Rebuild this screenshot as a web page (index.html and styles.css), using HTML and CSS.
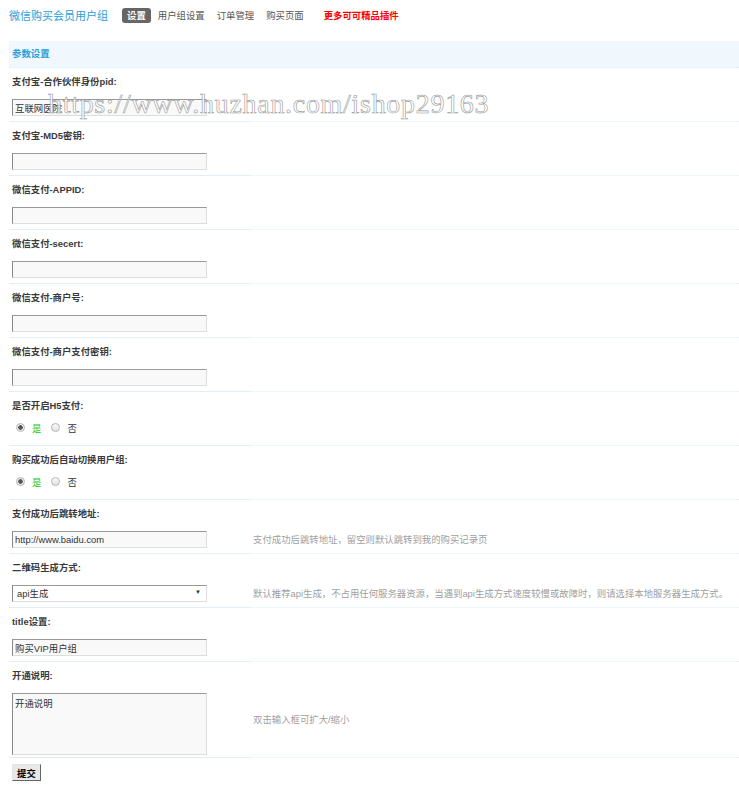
FILE: index.html
```html
<!DOCTYPE html>
<html lang="zh-CN">
<head>
    <meta charset="UTF-8">
    <meta name="viewport" content="width=device-width, initial-scale=1.0">
    <title>微信购买会员用户组</title>
    <link rel="stylesheet" href="styles.css">
</head>
<body>
<div class="page">
    <div class="topbar">
        <h3>微信购买会员用户组</h3>
        <ul class="tabs">
            <li><a href="#" class="current">设置</a></li>
            <li><a href="#">用户组设置</a></li>
            <li><a href="#">订单管理</a></li>
            <li><a href="#">购买页面</a></li>
            <li><a href="#" class="more">更多可可精品插件</a></li>
        </ul>
    </div>

    <form class="settings">
        <div class="partition">参数设置</div>

        <div class="row">
            <div class="label">支付宝-合作伙伴身份pid:</div>
            <div class="field"><input type="text" class="txt" value="互联网医院"></div>
            <div class="tip"></div>
        </div>
        <div class="row">
            <div class="label">支付宝-MD5密钥:</div>
            <div class="field"><input type="text" class="txt"></div>
            <div class="tip"></div>
        </div>
        <div class="row">
            <div class="label">微信支付-APPID:</div>
            <div class="field"><input type="text" class="txt"></div>
            <div class="tip"></div>
        </div>
        <div class="row">
            <div class="label">微信支付-secert:</div>
            <div class="field"><input type="text" class="txt"></div>
            <div class="tip"></div>
        </div>
        <div class="row">
            <div class="label">微信支付-商户号:</div>
            <div class="field"><input type="text" class="txt"></div>
            <div class="tip"></div>
        </div>
        <div class="row">
            <div class="label">微信支付-商户支付密钥:</div>
            <div class="field"><input type="text" class="txt"></div>
            <div class="tip"></div>
        </div>
        <div class="row">
            <div class="label">是否开启H5支付:</div>
            <div class="field">
                <div class="radios">
                    <label class="on"><input type="radio" name="h5" checked>是</label>
                    <label><input type="radio" name="h5">否</label>
                </div>
            </div>
            <div class="tip"></div>
        </div>
        <div class="row">
            <div class="label">购买成功后自动切换用户组:</div>
            <div class="field">
                <div class="radios">
                    <label class="on"><input type="radio" name="switch" checked>是</label>
                    <label><input type="radio" name="switch">否</label>
                </div>
            </div>
            <div class="tip"></div>
        </div>
        <div class="row">
            <div class="label">支付成功后跳转地址:</div>
            <div class="field"><input type="text" class="txt" value="http://www.baidu.com"></div>
            <div class="tip">支付成功后跳转地址，留空则默认跳转到我的购买记录页</div>
        </div>
        <div class="row">
            <div class="label">二维码生成方式:</div>
            <div class="field">
                <div class="select">
                    <select>
                        <option>api生成</option>
                        <option>本地服务器生成</option>
                    </select>
                </div>
            </div>
            <div class="tip">默认推荐api生成，不占用任何服务器资源，当遇到api生成方式速度较慢或故障时，则请选择本地服务器生成方式。</div>
        </div>
        <div class="row">
            <div class="label">title设置:</div>
            <div class="field"><input type="text" class="txt" value="购买VIP用户组"></div>
            <div class="tip"></div>
        </div>
        <div class="row">
            <div class="label">开通说明:</div>
            <div class="field area"><textarea class="txtarea">开通说明</textarea></div>
            <div class="tip tall">双击输入框可扩大/缩小</div>
        </div>

        <div class="submit"><button type="button">提交</button></div>
    </form>

    <div class="mark">https://www.huzhan.com/ishop29163</div>
</div>
</body>
</html>
```
FILE: styles.css
```css
body {
    margin: 0;
    font: 9.4px "Liberation Sans", "Noto Sans CJK SC", sans-serif;
    color: #333;
    background: #fff;
}
.page {
    position: relative;
    padding: 0 0 14px 9px;
}

/* title + tabs */
.topbar {
    display: flex;
    align-items: center;
    height: 30px;
}
.topbar h3 {
    margin: 0 14px 0 0;
    font-size: 11px;
    font-weight: normal;
    color: #2b9ed9;
}
.tabs {
    display: flex;
    list-style: none;
    margin: 0;
    padding: 0;
}
.tabs a {
    display: block;
    padding: 0 5px;
    margin-right: 2px;
    line-height: 15px;
    color: #555;
    text-decoration: none;
    border-radius: 3px;
}
.tabs .current {
    background: #666;
    color: #fff;
    font-weight: bold;
}
.tabs .more {
    margin-left: 8px;
    color: #f00;
    font-weight: bold;
}

/* settings table */
.partition {
    margin-top: 11px;
    height: 26px;
    line-height: 26px;
    padding-left: 3px;
    background: #f0f7fd;
    border-bottom: 1px dotted #deeffb;
    color: #2b9ed9;
    font-weight: bold;
}
.row {
    display: grid;
    grid-template-columns: 241px 1fr;
}
.row .label {
    grid-column: 1 / 3;
    height: 28px;
    line-height: 28px;
    padding-left: 3px;
    font-weight: bold;
    color: #3a3a3a;
}
.row .field {
    padding: 3px 3px 5px;
    border-bottom: 1px solid #deeffb;
}
.row .field.area {
    padding-bottom: 2px;
}
.row .tip {
    display: flex;
    align-items: center;
    padding: 0 0 4px 3px;
    white-space: nowrap;
    color: #a0a0a0;
    border-bottom: 1px dotted #deeffb;
}
.row .tip.tall {
    padding-bottom: 10px;
}

.txt,
.txtarea,
.select {
    box-sizing: border-box;
    width: 195px;
    border: 1px solid;
    border-color: #999 #ddd #ddd #888;
    background: #f9f9f9;
    color: #333;
    font: inherit;
}
.txt {
    display: block;
    height: 17px;
    padding: 0 2px;
}
.txtarea {
    display: block;
    height: 62px;
    padding: 2px;
    resize: none;
}
.select {
    position: relative;
    height: 17px;
    background: #fff;
}
.select select {
    appearance: none;
    width: 100%;
    height: 15px;
    border: 0;
    padding: 0 4px;
    background: transparent;
    font: inherit;
    color: #333;
}
.select::after {
    content: "▼";
    position: absolute;
    right: 5px;
    top: 3px;
    font-size: 6px;
    color: #333;
}

.radios {
    display: flex;
    align-items: center;
    height: 9px;
    margin-bottom: 8px;
}
.radios label {
    display: flex;
    align-items: center;
    margin-left: 4px;
    margin-right: 6px;
}
.radios label.on {
    color: #2c2;
}
.radios input {
    appearance: none;
    width: 9px;
    height: 9px;
    margin: 0 7px 0 0;
    border: 1px solid #b5b5b5;
    border-radius: 50%;
    background: linear-gradient(#fafafa, #e2e2e2);
}
.radios input:checked {
    background: radial-gradient(circle, #555 0 2px, #eee 2.5px);
}

.submit {
    padding: 6px 3px 0;
}
.submit button {
    height: 17px;
    padding: 0 4px;
    border: 1px solid;
    border-color: #e4e4e4 #666 #666 #e4e4e4;
    background: #e8e8e8;
    color: #000;
    font: bold 9.4px "Liberation Sans", "Noto Sans CJK SC", sans-serif;
}

/* shop watermark laid over the first rows */
.mark {
    position: absolute;
    left: 48px;
    top: 88px;
    font: 28px "Liberation Serif", serif;
    letter-spacing: 0.7px;
    color: rgba(255, 255, 255, 0.75);
    -webkit-text-stroke: 0.6px #999;
    pointer-events: none;
    white-space: nowrap;
}
```
